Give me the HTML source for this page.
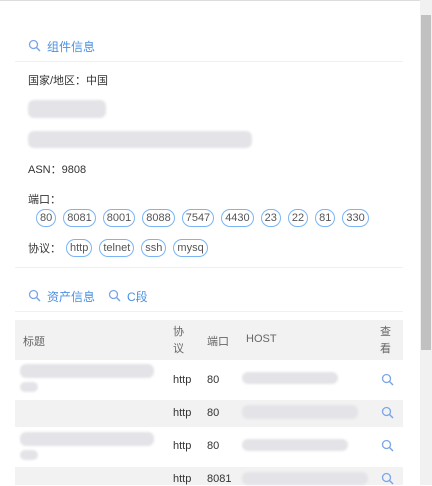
<!DOCTYPE html><html><head><meta charset="utf-8"><style>
body{margin:0;width:432px;height:485px;overflow:hidden;background:#fff;font-family:"Liberation Sans","Noto Sans CJK SC",sans-serif;font-size:11px;color:#333;position:relative}
.a{position:absolute}
.hd{color:#4a90e2;font-size:12px}
.tag{display:inline-block;border:1px solid #7ab4f5;border-radius:9px;padding:0 3px;height:16px;line-height:16px;margin-right:7px;color:#555;font-size:11px}
.blur{position:absolute;background:#e4e4e8;border-radius:6px;filter:blur(1px)}
.row{position:absolute;left:15px;width:388px}
.c{position:absolute;font-size:11px;color:#333}
</style></head><body>
<div class="a" style="left:0;top:0;width:420px;height:1px;background:#ddd"></div>
<div class="a" style="left:420px;top:0;width:12px;height:485px;background:#f1f1f1"></div>
<div class="a" style="left:421px;top:15px;width:10px;height:335px;background:#c1c1c1"></div>
<svg class="a" style="left:28px;top:39px" width="14" height="14"><circle cx="5.5" cy="5.5" r="4" fill="none" stroke="#7aa6e8" stroke-width="1.3"/><line x1="8.5" y1="8.5" x2="12" y2="12" stroke="#7aa6e8" stroke-width="1.5"/></svg>
<div class="a hd" style="left:47px;top:38px">组件信息</div>
<div class="a" style="left:15px;top:61px;width:388px;height:1px;background:#f0f0f0"></div>
<div class="a" style="left:28px;top:72px">国家/地区：中国</div>
<div class="blur" style="left:28px;top:100px;width:78px;height:18px"></div>
<div class="blur" style="left:28px;top:131px;width:224px;height:17px"></div>
<div class="a" style="left:28px;top:161px">ASN：9808</div>
<div class="a" style="left:28px;top:191px">端口：</div>
<div class="a" style="left:36px;top:209px;white-space:nowrap"><span class="tag">80</span><span class="tag">8081</span><span class="tag">8001</span><span class="tag">8088</span><span class="tag">7547</span><span class="tag">4430</span><span class="tag">23</span><span class="tag">22</span><span class="tag">81</span><span class="tag">330</span></div>
<div class="a" style="left:28px;top:240px">协议：</div>
<div class="a" style="left:66px;top:239px;white-space:nowrap"><span class="tag">http</span><span class="tag">telnet</span><span class="tag">ssh</span><span class="tag">mysq</span></div>
<div class="a" style="left:15px;top:267px;width:388px;height:1px;background:#f0f0f0"></div>
<svg class="a" style="left:28px;top:289px" width="14" height="14"><circle cx="5.5" cy="5.5" r="4" fill="none" stroke="#7aa6e8" stroke-width="1.3"/><line x1="8.5" y1="8.5" x2="12" y2="12" stroke="#7aa6e8" stroke-width="1.5"/></svg>
<div class="a hd" style="left:47px;top:288px">资产信息</div>
<svg class="a" style="left:108px;top:289px" width="14" height="14"><circle cx="5.5" cy="5.5" r="4" fill="none" stroke="#7aa6e8" stroke-width="1.3"/><line x1="8.5" y1="8.5" x2="12" y2="12" stroke="#7aa6e8" stroke-width="1.5"/></svg>
<div class="a hd" style="left:127px;top:288px">C段</div>
<div class="a" style="left:15px;top:311px;width:388px;height:1px;background:#f0f0f0"></div>
<div class="row" style="top:320px;height:40px;background:#f2f2f2"></div>
<div class="c" style="left:23px;top:333px;color:#666">标题</div>
<div class="c" style="left:173px;top:324px;color:#666;line-height:17px">协<br>议</div>
<div class="c" style="left:207px;top:333px;color:#666">端口</div>
<div class="c" style="left:246px;top:333px;color:#666">HOST</div>
<div class="c" style="left:380px;top:324px;color:#666;line-height:17px">查<br>看</div>
<div class="row" style="top:400px;height:27px;background:#f2f2f2"></div>
<div class="row" style="top:467px;height:18px;background:#f2f2f2"></div>
<div class="blur" style="left:20px;top:364px;width:134px;height:14px"></div>
<div class="blur" style="left:20px;top:382px;width:18px;height:10px"></div>
<div class="blur" style="left:20px;top:432px;width:134px;height:14px"></div>
<div class="blur" style="left:20px;top:450px;width:18px;height:10px"></div>
<div class="c" style="left:173px;top:374px">http</div><div class="c" style="left:207px;top:374px">80</div>
<div class="c" style="left:173px;top:407px">http</div><div class="c" style="left:207px;top:407px">80</div>
<div class="c" style="left:173px;top:440px">http</div><div class="c" style="left:207px;top:440px">80</div>
<div class="c" style="left:173px;top:473px">http</div><div class="c" style="left:207px;top:473px">8081</div>
<div class="blur" style="left:242px;top:372px;width:96px;height:12px"></div>
<div class="blur" style="left:242px;top:405px;width:116px;height:14px"></div>
<div class="blur" style="left:242px;top:439px;width:106px;height:12px"></div>
<div class="blur" style="left:242px;top:472px;width:126px;height:13px"></div>
<svg class="a" style="left:381px;top:373px" width="14" height="14"><circle cx="5.5" cy="5.5" r="4" fill="none" stroke="#7aa6e8" stroke-width="1.3"/><line x1="8.5" y1="8.5" x2="12" y2="12" stroke="#7aa6e8" stroke-width="1.5"/></svg>
<svg class="a" style="left:381px;top:406px" width="14" height="14"><circle cx="5.5" cy="5.5" r="4" fill="none" stroke="#7aa6e8" stroke-width="1.3"/><line x1="8.5" y1="8.5" x2="12" y2="12" stroke="#7aa6e8" stroke-width="1.5"/></svg>
<svg class="a" style="left:381px;top:439px" width="14" height="14"><circle cx="5.5" cy="5.5" r="4" fill="none" stroke="#7aa6e8" stroke-width="1.3"/><line x1="8.5" y1="8.5" x2="12" y2="12" stroke="#7aa6e8" stroke-width="1.5"/></svg>
<svg class="a" style="left:381px;top:472px" width="14" height="14"><circle cx="5.5" cy="5.5" r="4" fill="none" stroke="#7aa6e8" stroke-width="1.3"/><line x1="8.5" y1="8.5" x2="12" y2="12" stroke="#7aa6e8" stroke-width="1.5"/></svg>
</body></html>
